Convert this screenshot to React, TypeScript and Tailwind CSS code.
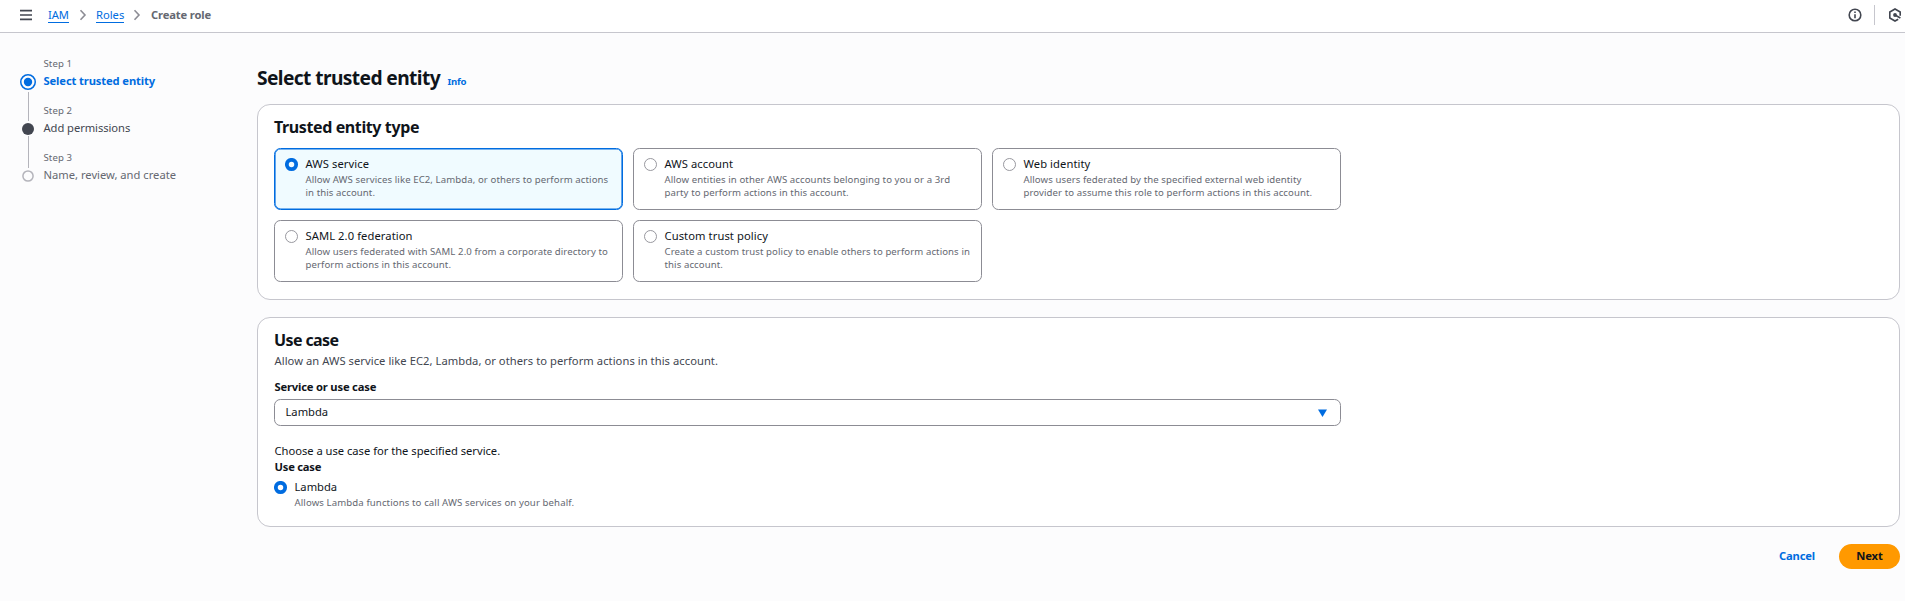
type Option = { title: string; lines: [string, string]; selected?: boolean };

const OPTIONS: Option[] = [
  {
    title: "AWS service",
    lines: ["Allow AWS services like EC2, Lambda, or others to perform actions", "in this account."],
    selected: true,
  },
  {
    title: "AWS account",
    lines: ["Allow entities in other AWS accounts belonging to you or a 3rd", "party to perform actions in this account."],
  },
  {
    title: "Web identity",
    lines: ["Allows users federated by the specified external web identity", "provider to assume this role to perform actions in this account."],
  },
  {
    title: "SAML 2.0 federation",
    lines: ["Allow users federated with SAML 2.0 from a corporate directory to", "perform actions in this account."],
  },
  {
    title: "Custom trust policy",
    lines: ["Create a custom trust policy to enable others to perform actions in", "this account."],
  },
];

function Radio({ selected }: { selected?: boolean }) {
  return (
    <svg className="block size-[14px] shrink-0" viewBox="0 0 14 14" fill="none">
      {selected ? (
        <circle cx="6.500" cy="6.500" r="4.650" stroke="#006ce0" strokeWidth="3.800" />
      ) : (
        <circle cx="6.500" cy="6.500" r="6" fill="#fff" stroke="#8c8c94" strokeWidth="0.900" />
      )}
    </svg>
  );
}

function Chevron() {
  return (
    <svg className="block h-[12px] w-[8px]" viewBox="0 0 8 12" fill="none">
      <path d="M1.5 1.2 6 6l-4.500 4.800" stroke="#8c8c94" strokeWidth="1.6" />
    </svg>
  );
}

function Header() {
  return (
    <header className="flex h-[33px] shrink-0 items-center border-b border-[#c6c6cd] bg-white pl-5">
      <svg className="-mt-[3px] block h-[12px] w-[12px]" viewBox="0 0 12 12" fill="none">
        <path d="M0 1.600h12M0 6h12M0 10.400h12" stroke="#424650" strokeWidth="1.600" />
      </svg>
      <nav className="-mt-0.5 flex items-center pl-4">
        <a className="mt-px h-[15px] w-[21px] border-b border-[#006ce0] leading-[14px] tracking-[-0.150px] text-[#006ce0]">IAM</a>
        <span className="pl-[10px] pr-[9px]"><Chevron /></span>
        <a className="mt-px h-[15px] w-[28px] border-b border-[#006ce0] leading-[14px] text-[#006ce0]">Roles</a>
        <span className="pl-[9px] pr-[10px]"><Chevron /></span>
        <span className="mt-px h-[15px] font-bold leading-[14px] tracking-[-0.140px] text-[#656871]">Create role</span>
      </nav>
      <div className="-mt-[3px] ml-auto flex items-center">
        <svg className="block size-[14px]" viewBox="0 0 14 14" fill="none">
          <circle cx="7" cy="7" r="5.800" stroke="#424650" strokeWidth="1.600" />
          <path d="M7 6.300v4M7 3.500v1.600" stroke="#424650" strokeWidth="1.600" />
        </svg>
        <span className="ml-[12px] h-5 w-px bg-[#c6c6cd]" />
        <svg className="ml-[13px] mr-[3px] block size-[14px]" viewBox="0 0 14 14" fill="none">
          <path d="M12.200 7.800V4L7 1 1.800 4v6L7 13l3.200-1.800" stroke="#424650" strokeWidth="1.600" />
          <path d="M7 7l5.400 3" stroke="#424650" strokeWidth="1.600" />
          <circle cx="7" cy="7" r="1.900" fill="#424650" />
        </svg>
      </div>
    </header>
  );
}

function Steps() {
  return (
    <aside className="flex w-[257px] shrink-0 pl-5 pt-6">
      <svg className="mt-[17px] block h-[110px] w-4 shrink-0" viewBox="0 0 16 110" fill="none">
        <path d="M8.500 18v29M8.500 62v32" stroke="#b4b4bb" />
        <circle cx="8" cy="8" r="7.250" stroke="#006ce0" strokeWidth="1.500" />
        <circle cx="8" cy="8" r="4.200" fill="#006ce0" />
        <circle cx="8" cy="55" r="6" fill="#424650" />
        <circle cx="8" cy="102" r="5.100" stroke="#b4b4bb" strokeWidth="1.500" />
      </svg>
      <ol className="pl-[7.500px]">
        <li className="h-[47px]">
          <p className="h-4 pt-px text-[9.600px] leading-[12.800px] tracking-[0.100px] text-[#656871]">Step 1</p>
          <p className="font-bold tracking-[-0.120px] text-[#006ce0]">Select trusted entity</p>
        </li>
        <li className="h-[47px]">
          <p className="h-4 pt-px text-[9.600px] leading-[12.800px] tracking-[0.100px] text-[#656871]">Step 2</p>
          <p className="tracking-[-0.060px] text-[#424650]">Add permissions</p>
        </li>
        <li className="h-[47px]">
          <p className="h-4 pt-px text-[9.600px] leading-[12.800px] tracking-[0.100px] text-[#656871]">Step 3</p>
          <p className="text-[#656871]">Name, review, and create</p>
        </li>
      </ol>
    </aside>
  );
}

function Tile({ title, lines, selected }: Option) {
  return (
    <label
      className={
        selected
          ? "flex h-[62px] rounded-[6.400px] border border-[#006ce0] bg-[#f0fbff] pl-[10px] pt-[7px] shadow-[inset_0_0_0_0.600px_#006ce0]"
          : "flex h-[62px] rounded-[6.400px] border border-[#8c8c94] bg-white pl-[10px] pt-[7px]"
      }
    >
      <span className="pt-[2px]"><Radio selected={selected} /></span>
      <span className="block pl-[6.500px]">
        <span className="block h-[16.500px] tracking-[0.080px]">{title}</span>
        <span className="block whitespace-nowrap text-[9.600px] leading-[13px] tracking-[0.090px] text-[#656871]">
          {lines[0]}
          <br />
          {lines[1]}
        </span>
      </span>
    </label>
  );
}

export default function App() {
  return (
    <div className="flex h-[601px] w-full flex-col overflow-hidden bg-[#fcfcfd] font-['Noto_Sans',sans-serif] text-[11.200px] leading-4 text-[#0f141a]">
      <Header />
      <div className="flex grow">
        <Steps />
        <main className="grow pr-[5px] pt-[33px]">
          <div className="flex h-[38px] items-baseline">
            <h1 className="text-[19.200px] font-bold leading-6 tracking-[-0.600px]">Select trusted entity</h1>
            <a className="pl-[7.500px] text-[9.600px] font-bold tracking-[-0.200px] text-[#006ce0]">Info</a>
          </div>

          <section className="h-[196px] rounded-[13px] border border-[#c6c6cd] bg-white px-4 pt-3">
            <h2 className="h-[31px] text-base font-bold leading-5 tracking-[-0.390px]">Trusted entity type</h2>
            <div className="grid w-[1067px] grid-cols-3 gap-[10px]">
              {OPTIONS.map((option) => (
                <Tile key={option.title} {...option} />
              ))}
            </div>
          </section>

          <section className="mt-[17px] h-[210px] rounded-[13px] border border-[#c6c6cd] bg-white px-4 pt-3">
            <h2 className="h-[23px] text-base font-bold leading-5 tracking-[-0.600px]">Use case</h2>
            <p className="pl-[0.500px] tracking-[0.050px] text-[#424650]">
              Allow an AWS service like EC2, Lambda, or others to perform actions in this account.
            </p>
            <p className="mt-[10px] pl-[0.500px] font-bold tracking-[-0.180px]">Service or use case</p>
            <div className="mt-1 flex h-[27px] w-[1067px] items-center justify-between rounded-[6.400px] border border-[#8c8c94] pl-[10.500px] pr-[13px]">
              <span className="-mt-0.5">Lambda</span>
              <svg className="block h-[8px] w-[9px]" viewBox="0 0 9 8">
                <path d="M0 .500h9L4.500 8z" fill="#006ce0" />
              </svg>
            </div>
            <p className="mt-[17px] pl-[0.500px] tracking-[-0.020px]">Choose a use case for the specified service.</p>
            <p className="pl-[0.500px] font-bold tracking-[-0.220px]">Use case</p>
            <label className="mt-1 flex">
              <span className="pt-[2px]"><Radio selected /></span>
              <span className="block pl-[6.500px]">
                <span className="block h-[17px]">Lambda</span>
                <span className="block text-[9.600px] leading-[13px] tracking-[0.110px] text-[#656871]">
                  Allows Lambda functions to call AWS services on your behalf.
                </span>
              </span>
            </label>
          </section>

          <div className="mt-[17px] flex items-center justify-end font-bold tracking-[-0.150px]">
            <button className="-mt-0.5 mr-6 text-[#006ce0]">Cancel</button>
            <button className="h-[25px] w-[61px] rounded-full bg-[#ff9900] pb-0.5">Next</button>
          </div>
        </main>
      </div>
    </div>
  );
}
